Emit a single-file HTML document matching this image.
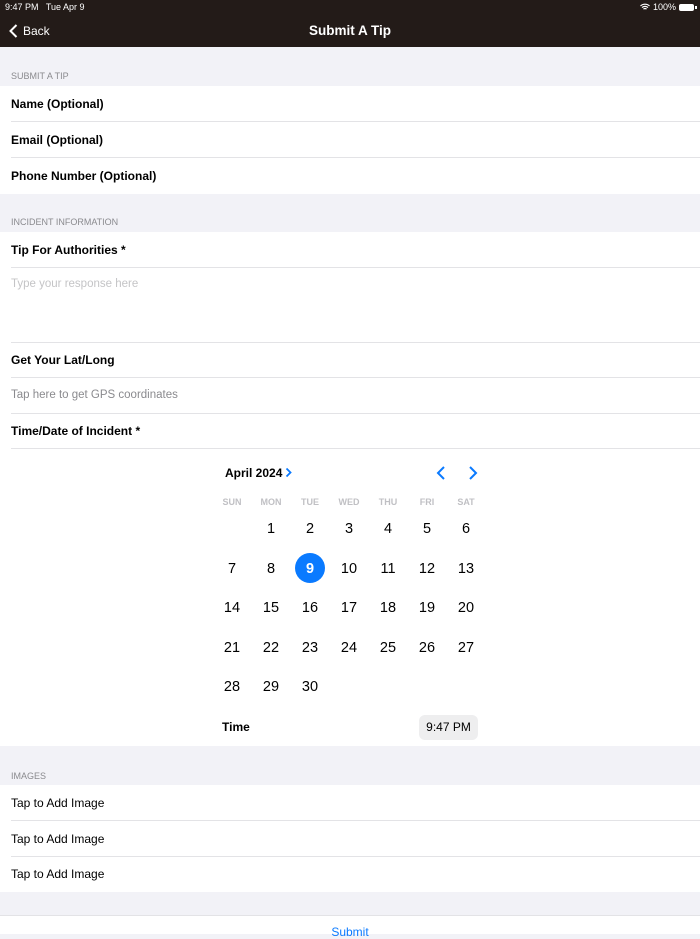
<!DOCTYPE html>
<html><head><style>
*{margin:0;padding:0;box-sizing:border-box}
body{width:700px;height:934px;overflow:hidden;background:#f2f2f7;font-family:"Liberation Sans",sans-serif;position:relative;color:#000}
.a{position:absolute}
.w{position:absolute;left:0;width:700px;background:#fff}
.t{position:absolute;font-size:12px;white-space:nowrap}
.b{font-weight:bold}
.h{position:absolute;left:11px;font-size:9px;color:#8a8a8e}
.ln{position:absolute;left:11px;right:0;height:1px;background:#e3e3e6}
.c{position:absolute;width:30px;margin-left:-15px;text-align:center;font-size:14.5px}
.d{position:absolute;width:30px;margin-left:-15px;text-align:center;font-size:9px;color:#c0c0c4;font-weight:bold}
</style></head><body>
<div class="a" style="left:0;top:0;width:700px;height:47px;background:#231b18"></div>
<div class="t" style="left:5px;top:2px;font-size:9px;color:#fff">9:47 PM&nbsp;&nbsp; Tue Apr 9</div>
<div class="t" style="left:653px;top:2px;font-size:9px;color:#fff">100%</div>
<svg class="a" style="left:640px;top:3px" width="10" height="8" viewBox="0 0 10 8"><path d="M0.5 3A6.5 6.5 0 0 1 9.5 3M2 4.6A4.3 4.3 0 0 1 8 4.6M3.5 6.2A2 2 0 0 1 6.5 6.2" stroke="#fff" stroke-width="1.2" fill="none"/></svg>
<div class="a" style="left:679px;top:4px;width:15px;height:7px;background:#fff;border-radius:2px"></div>
<div class="a" style="left:695px;top:6px;width:1.5px;height:3px;background:#fff"></div>
<svg class="a" style="left:9px;top:24px" width="9" height="14" viewBox="0 0 9 14"><path d="M7.5 1L1.5 7l6 6" stroke="#fff" stroke-width="2" fill="none"/></svg>
<div class="t" style="left:23px;top:24px;color:#fff;font-size:12px">Back</div>
<div class="t b" style="left:0;width:700px;text-align:center;top:23px;color:#fff;font-size:13.5px">Submit A Tip</div>

<div class="h" style="top:71px">SUBMIT A TIP</div>
<div class="w" style="top:86px;height:108px"></div>
<div class="t b" style="left:11px;top:97px">Name (Optional)</div>
<div class="ln" style="top:121px"></div>
<div class="t b" style="left:11px;top:133px">Email (Optional)</div>
<div class="ln" style="top:157px"></div>
<div class="t b" style="left:11px;top:169px">Phone Number (Optional)</div>

<div class="h" style="top:217px">INCIDENT INFORMATION</div>
<div class="w" style="top:232px;height:514px"></div>
<div class="t b" style="left:11px;top:243px">Tip For Authorities *</div>
<div class="ln" style="top:267px"></div>
<div class="t" style="left:11px;top:278px;color:#c4c4c6;font-size:11.5px">Type your response here</div>
<div class="ln" style="top:342px"></div>
<div class="t b" style="left:11px;top:353px">Get Your Lat/Long</div>
<div class="ln" style="top:377px"></div>
<div class="t" style="left:11px;top:389px;color:#8a8a8e;font-size:11.5px">Tap here to get GPS coordinates</div>
<div class="ln" style="top:413px"></div>
<div class="t b" style="left:11px;top:424px">Time/Date of Incident *</div>
<div class="ln" style="top:448px"></div>

<div class="t b" style="left:225px;top:466px;font-size:12px">April 2024</div>
<svg class="a" style="left:285px;top:467px" width="7" height="11" viewBox="0 0 7 11"><path d="M1.5 1.5l4 4-4 4" stroke="#0a7aff" stroke-width="1.8" fill="none"/></svg>
<svg class="a" style="left:436px;top:465px" width="10" height="16" viewBox="0 0 10 16"><path d="M8 2L2 8l6 6" stroke="#0a7aff" stroke-width="2" fill="none"/></svg>
<svg class="a" style="left:468px;top:465px" width="10" height="16" viewBox="0 0 10 16"><path d="M2 2l6 6-6 6" stroke="#0a7aff" stroke-width="2" fill="none"/></svg>
<div class="d" style="left:232px;top:497px">SUN</div><div class="d" style="left:271px;top:497px">MON</div><div class="d" style="left:310px;top:497px">TUE</div><div class="d" style="left:349px;top:497px">WED</div><div class="d" style="left:388px;top:497px">THU</div><div class="d" style="left:427px;top:497px">FRI</div><div class="d" style="left:466px;top:497px">SAT</div>

<div class="a" style="left:295px;top:553px;width:30px;height:30px;border-radius:50%;background:#0a7aff"></div>
<div class="c" style="left:271px;top:521px">1</div><div class="c" style="left:310px;top:521px">2</div><div class="c" style="left:349px;top:521px">3</div><div class="c" style="left:388px;top:521px">4</div><div class="c" style="left:427px;top:521px">5</div><div class="c" style="left:466px;top:521px">6</div>
<div class="c" style="left:232px;top:561px">7</div><div class="c" style="left:271px;top:561px">8</div><div class="c b" style="left:310px;top:561px;color:#fff">9</div><div class="c" style="left:349px;top:561px">10</div><div class="c" style="left:388px;top:561px">11</div><div class="c" style="left:427px;top:561px">12</div><div class="c" style="left:466px;top:561px">13</div>
<div class="c" style="left:232px;top:600px">14</div><div class="c" style="left:271px;top:600px">15</div><div class="c" style="left:310px;top:600px">16</div><div class="c" style="left:349px;top:600px">17</div><div class="c" style="left:388px;top:600px">18</div><div class="c" style="left:427px;top:600px">19</div><div class="c" style="left:466px;top:600px">20</div>
<div class="c" style="left:232px;top:640px">21</div><div class="c" style="left:271px;top:640px">22</div><div class="c" style="left:310px;top:640px">23</div><div class="c" style="left:349px;top:640px">24</div><div class="c" style="left:388px;top:640px">25</div><div class="c" style="left:427px;top:640px">26</div><div class="c" style="left:466px;top:640px">27</div>
<div class="c" style="left:232px;top:679px">28</div><div class="c" style="left:271px;top:679px">29</div><div class="c" style="left:310px;top:679px">30</div>

<div class="t b" style="left:222px;top:720px;font-size:12px">Time</div>
<div class="a" style="left:419px;top:715px;width:59px;height:25px;border-radius:6px;background:#eeeeef;font-size:12px;text-align:center;line-height:25px">9:47 PM</div>

<div class="h" style="top:771px">IMAGES</div>
<div class="w" style="top:785px;height:107px"></div>
<div class="t" style="left:11px;top:796px">Tap to Add Image</div>
<div class="ln" style="top:820px"></div>
<div class="t" style="left:11px;top:832px">Tap to Add Image</div>
<div class="ln" style="top:856px"></div>
<div class="t" style="left:11px;top:867px">Tap to Add Image</div>
<div class="w" style="top:915px;height:19px;border-top:1px solid #e3e3e6"></div>
<div class="t" style="left:0;width:700px;text-align:center;top:925px;color:#0a7aff;font-size:12px">Submit</div>
</body></html>
